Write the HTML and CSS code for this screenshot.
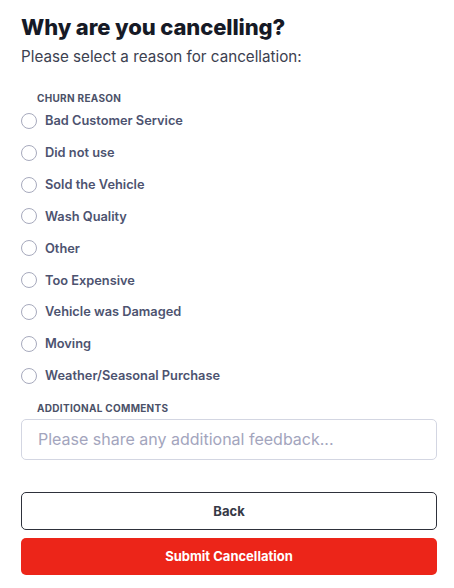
FILE: index.html
```html
<!DOCTYPE html>
<html>
<head>
<meta charset="utf-8">
<link rel="stylesheet" href="styles.css">
</head>
<body>
<div class="page">
  <h1 class="title">Why are you cancelling?</h1>
  <p class="subtitle">Please select a reason for cancellation:</p>
  <div class="section-label">CHURN REASON</div>
  <div class="options">
    <label class="option"><span class="radio"></span><span class="opt-text">Bad Customer Service</span></label>
    <label class="option"><span class="radio"></span><span class="opt-text">Did not use</span></label>
    <label class="option"><span class="radio"></span><span class="opt-text">Sold the Vehicle</span></label>
    <label class="option"><span class="radio"></span><span class="opt-text">Wash Quality</span></label>
    <label class="option"><span class="radio"></span><span class="opt-text">Other</span></label>
    <label class="option"><span class="radio"></span><span class="opt-text">Too Expensive</span></label>
    <label class="option"><span class="radio"></span><span class="opt-text">Vehicle was Damaged</span></label>
    <label class="option"><span class="radio"></span><span class="opt-text">Moving</span></label>
    <label class="option"><span class="radio"></span><span class="opt-text">Weather/Seasonal Purchase</span></label>
  </div>
  <div class="section-label comments-label">ADDITIONAL COMMENTS</div>
  <div class="input"><span class="placeholder">Please share any additional feedback...</span></div>
  <div class="buttons">
    <div class="btn btn-back">Back</div>
    <div class="btn btn-submit">Submit Cancellation</div>
  </div>
</div>
</body>
</html>
```

FILE: styles.css
```css
html, body {
  margin: 0;
  padding: 0;
  background: #ffffff;
}
body {
  font-family: Inter, "Noto Sans", sans-serif;
}
.page {
  padding: 13px 17px 0 21px;
  display: flex;
  flex-direction: column;
}
.title {
  margin: 0;
  font-size: 22px;
  line-height: 28px;
  font-weight: 800;
  color: #161a26;
  letter-spacing: -0.1px;
}
.subtitle {
  margin: 5px 0 0 0;
  font-size: 15.2px;
  line-height: 22px;
  font-weight: 400;
  color: #3c4150;
}
.section-label {
  margin: 23px 0 0 16px;
  font-size: 10px;
  line-height: 14px;
  font-weight: 700;
  letter-spacing: 0.3px;
  color: #4b5168;
}
.options {
  display: flex;
  flex-direction: column;
  margin-top: 0;
}
.option {
  display: flex;
  align-items: center;
  gap: 8px;
  height: 31.85px;
}
.radio {
  width: 14px;
  height: 14px;
  border: 1px solid #a7aabd;
  border-radius: 50%;
  flex: none;
}
.opt-text {
  font-size: 12.8px;
  font-weight: 600;
  color: #4d5370;
}
.comments-label {
  margin-top: 9px;
}
.input {
  margin-top: 4px;
  height: 39px;
  border: 1px solid #d3d6e2;
  border-radius: 5px;
  display: flex;
  align-items: center;
  padding-left: 16px;
}
.placeholder {
  font-size: 16px;
  color: #a3a5bd;
}
.buttons {
  margin-top: 32px;
  display: flex;
  flex-direction: column;
  gap: 8px;
}
.btn {
  height: 37px;
  border-radius: 5px;
  display: flex;
  align-items: center;
  justify-content: center;
  font-size: 13px;
  font-weight: 700;
}
.btn-back {
  border: 1px solid #2e313b;
  height: 36px;
  color: #363946;
}
.btn-submit {
  background: #ec2519;
  color: #ffffff;
}
```
